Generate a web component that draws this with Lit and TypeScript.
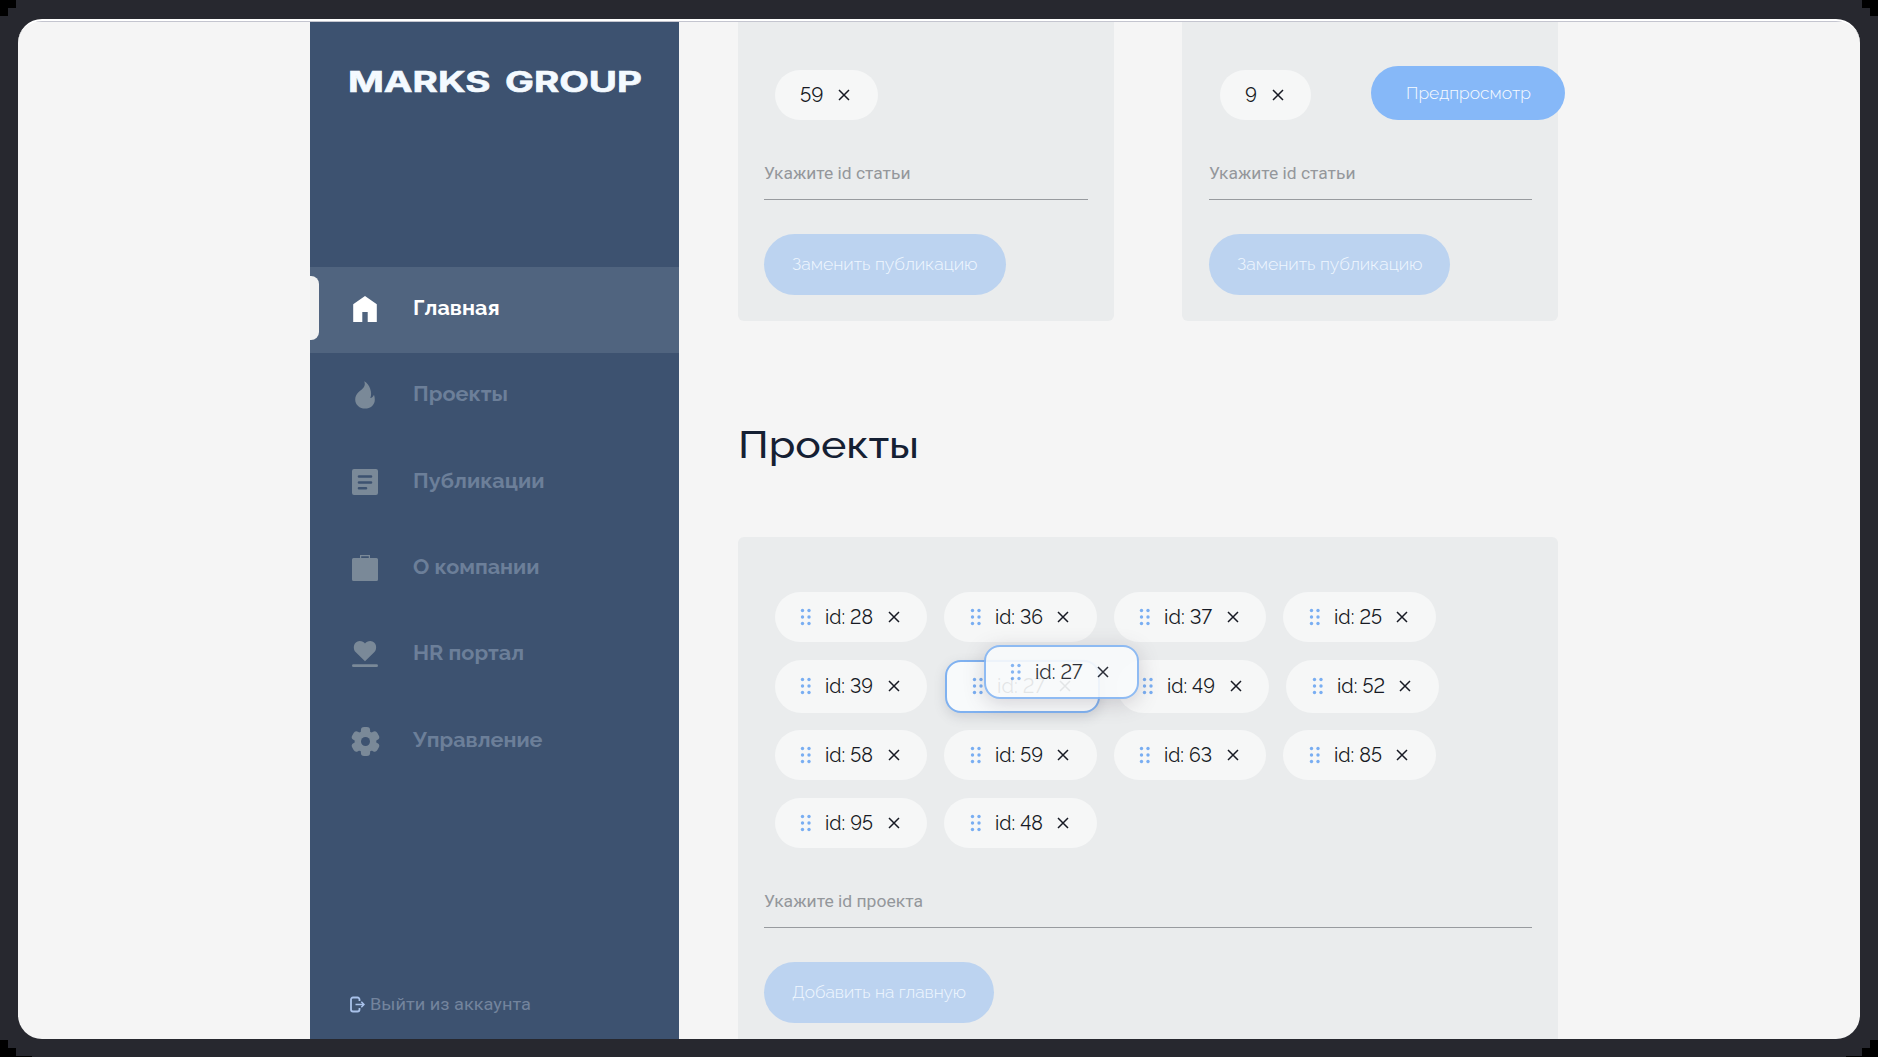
import { LitElement, html, css, svg } from "lit";
import { customElement, property } from "lit/decorators.js";
import { classMap } from "lit/directives/class-map.js";

/** A single line of text stretched horizontally to an exact width. */
@customElement("fit-text")
class FitText extends LitElement {
  @property({ type: Number }) width = 0;
  @property() text = "";
  static styles = css`
    :host { display: block; white-space: pre; flex: none; }
    .ink { display: inline-block; transform-origin: 0 50%; }
  `;
  render() {
    return html`<span class="ink">${this.text}</span>`;
  }
  updated() {
    const ink = this.renderRoot.querySelector(".ink") as HTMLElement;
    const exact = ink.getBoundingClientRect().width || 1;
    this.style.width = `${this.width}px`;
    ink.style.transform = `scaleX(${this.width / exact})`;
  }
}

const icons: Record<string, unknown> = {
  home: svg`<path d="M14 1 2.200 9.300V27h9.100V17h5.400v10h9.100V9.300z"/>`,
  fire: svg`<path d="M13.200 .2c1 2.500.8 4.300-.6 6.300C10.700 9.300 4.200 12 4.200 18.500 4.200 24 8.700 27.600 14 27.600c5.600 0 9.800-3.700 9.800-8.900 0-1.800-.2-3.300-.8-4.900-.8 2-2 3.100-3.700 3.300 1.100-2.700 1.100-6-.2-9.600C18 4.300 16 1.800 13.200.2z"/>`,
  article: svg`<path fill-rule="evenodd" d="M3 1h22a2 2 0 0 1 2 2v22a2 2 0 0 1-2 2H3a2 2 0 0 1-2-2V3a2 2 0 0 1 2-2zM8 7.200a1.200 1.200 0 0 0 0 2.600h12a1.200 1.200 0 0 0 0-2.600zM8 13.200a1.200 1.200 0 0 0 0 2.600h12a1.200 1.200 0 0 0 0-2.600zM8 18.900a1.200 1.200 0 0 0 0 2.600h7a1.200 1.200 0 0 0 0-2.600z"/>`,
  bag: svg`<path fill-rule="evenodd" d="M9 4V1h10v3h6.500A1.500 1.500 0 0 1 27 5.500v20a1.500 1.500 0 0 1-1.500 1.500h-23A1.500 1.500 0 0 1 1 25.500v-20A1.500 1.500 0 0 1 2.500 4zm1.200 0h7.600V2.200h-7.600z"/>`,
  heart: svg`<path d="M14 21.200 4.800 12.300C1.300 8.800 2.400 1.300 8.600.9c2.500 0 4.300 1 5.400 2.700C15.100 1.900 16.900.9 19.400.9c6.200.4 7.300 7.900 3.800 11.400z"/><rect x="1" y="24.200" width="26" height="2.900" rx="1.450"/>`,
  gear: svg`<circle cx="14.500" cy="14.500" r="10.800"/>${[0, 60, 120].map(a => svg`<rect x="9.900" y="0" width="9.200" height="29" rx="3.200" transform="rotate(${a} 14.500 14.500)"/>`)}<circle class="hole" cx="14.500" cy="14.500" r="4.500"/>`,
};

const menu = [
  { icon: "home", label: "Главная", width: 86.5 },
  { icon: "fire", label: "Проекты", width: 95 },
  { icon: "article", label: "Публикации", width: 131.5 },
  { icon: "bag", label: "О компании", width: 126.5 },
  { icon: "heart", label: "HR портал", width: 111 },
  { icon: "gear", label: "Управление", width: 129.5 },
];

@customElement("side-menu")
class SideMenu extends LitElement {
  static styles = css`
    :host { display: flex; flex-direction: column; width: 369px; flex: none; background: #3d5270; }
    .logo { padding: 44.500px 0 0 37.500px; height: 200.500px; font: 700 28px/30px Inter, "Liberation Sans", sans-serif; word-spacing: 4px; color: #f4faff; -webkit-text-stroke: 0.6px #f4faff; }
    .item { position: relative; display: flex; align-items: center; height: 86.300px; flex: none; color: #6c7f99; font: 700 21px/30px Raleway, "Open Sans", sans-serif; }
    .item.active { background: #50647f; color: #fff; }
    .item.active::before { content: ""; position: absolute; left: 0; top: 9px; width: 8.500px; height: 64px; border-radius: 0 8px 8px 0; background: #f1f2f2; }
    .icon { width: 28px; height: 30px; margin: 0 22px 0 41px; fill: #7a8998; overflow: visible; }
    .hole { fill: #3d5270; }
    .active .icon { fill: #fff; }
    .label { margin: -4px 0 0 12px; }
    .exit { display: flex; align-items: center; margin-top: auto; padding: 0 0 20px 40px; color: #73849d; font: 400 17px/30px Roboto, sans-serif; }
    .exit svg { width: 15px; height: 17px; margin-right: 4.500px; fill: none; stroke: #a9c2ea; stroke-width: 1.800; }
  `;
  render() {
    return html`
      <div class="logo"><fit-text text="MARKS GROUP" width="294"></fit-text></div>
      ${menu.map((m, i) => html`
        <div class=${classMap({ item: true, active: i === 0 })}>
          <svg class="icon" viewBox="0 0 28 30">${icons[m.icon]}</svg>
          <fit-text class="label" text=${m.label} width=${m.width}></fit-text>
        </div>`)}
      <div class="exit">
        <svg viewBox="0 0 15 17"><path d="M9.500 5V3.500A2 2 0 0 0 7.500 1.500H3a2 2 0 0 0-2 2v10a2 2 0 0 0 2 2h4.500a2 2 0 0 0 2-2V12"/><path d="M5.500 8.500H14M11.300 5.700l2.700 2.800-2.700 2.800" stroke-width="1.500"/></svg>
        <fit-text text="Выйти из аккаунта" width="161"></fit-text>
      </div>`;
  }
}

@customElement("id-chip")
class IdChip extends LitElement {
  @property() label = "";
  @property({ type: Number }) width = 48;
  @property({ type: Boolean }) handle = false;
  static styles = css`
    :host { display: flex; align-items: center; box-sizing: border-box; height: 50px; padding: 0 27.500px 0 25.500px; border-radius: 25px; background: #f6f7f7; color: #171a24; font: 400 20px/30px Raleway, "Open Sans", sans-serif; font-variant-numeric: lining-nums; }
    .dots { width: 12px; height: 18px; margin: 0 13px 0 0; fill: #79aef2; flex: none; }
    .close { width: 12px; height: 12px; margin-left: 14.500px; stroke: #171a24; stroke-width: 1.500; flex: none; }
  `;
  render() {
    return html`
      ${this.handle ? html`<svg class="dots" viewBox="0 0 12 18">${[2.5, 9].map(x => [2.5, 9, 15.5].map(y => svg`<circle cx=${x} cy=${y} r="1.700"/>`))}</svg>` : ""}
      <fit-text text=${this.label} width=${this.width}></fit-text>
      <svg class="close" viewBox="0 0 12 12"><path d="M1 1l10 10M11 1 1 11"/></svg>`;
  }
}

@customElement("id-form")
class IdForm extends LitElement {
  @property() hint = "";
  @property() action = "";
  @property({ type: Number }) hintWidth = 0;
  @property({ type: Number }) actionWidth = 0;
  static styles = css`
    :host { display: block; padding: 0 26px; }
    .field { height: 41px; margin-top: -1px; border-bottom: 1.500px solid #989b9f; color: #94979b; font: 400 17px/30px Roboto, sans-serif; }
    .button { display: inline-flex; align-items: center; height: 61px; margin-top: 34px; padding: 0 28px; border-radius: 31px; background: #bcd3f0; color: #f0f7ff; font: 300 17.500px/30px Raleway, "Open Sans", sans-serif; }
  `;
  render() {
    return html`
      <div class="field"><fit-text text=${this.hint} width=${this.hintWidth}></fit-text></div>
      <div class="button"><fit-text text=${this.action} width=${this.actionWidth}></fit-text></div>`;
  }
}

const rows = [[28, 36, 37, 25], [39, 27, 49, 52], [58, 59, 63, 85], [95, 48]];

@customElement("app-root")
class AppRoot extends LitElement {
  static styles = css`
    :host { display: block; width: 1878px; height: 1057px; }
    .stage { position: relative; box-sizing: border-box; width: 1878px; height: 1057px; padding: 19px 18px 18px; background: #27282f; overflow: hidden; }
    .notches { position: absolute; left: 0; top: 0; width: 1878px; height: 1057px; }
    .window { position: relative; box-sizing: border-box; height: 1020px; border-radius: 24px; overflow: hidden; background: #f5f5f5; border-top: 2px solid #fff; }
    .page { display: flex; height: 1018px; box-sizing: border-box; border-top: 1px solid #c4c5cf; padding-left: 292px; }
    .main { width: 820px; margin-left: 59px; flex: none; display: flex; flex-direction: column; }
    .pair { display: flex; gap: 68px; height: 298.500px; flex: none; }
    .card { background: #eaeced; border-radius: 6px; box-sizing: border-box; }
    .small { position: relative; width: 376px; border-radius: 0 0 6px 6px; padding-top: 47.500px; }
    .small + .small .line { margin-left: 37.500px; }
    .small + .small id-form { margin-left: 0.500px; }
    .line { display: flex; margin: 0 36px 39px 36.500px; }
    .preview { position: absolute; left: 189px; top: 43.500px; height: 54.500px; width: 194px; box-sizing: border-box; padding-left: 34.500px; display: flex; align-items: center; border-radius: 28px; background: #86b8f8; color: #f7fbff; font: 300 17.500px/30px Raleway, "Open Sans", sans-serif; }
    .title { margin: 98px 0 0 -0.500px; height: 118px; flex: none; font: 500 36.500px/54px Raleway, "Open Sans", sans-serif; color: #152033; }
    .big { flex: 1 0 520px; padding-top: 55px; }
    .row { display: flex; gap: 17px; margin: 0 36px 18px 36.500px; height: 50px; }
    .row.tall { height: 53px; margin-bottom: 17px; }
    .tall id-chip { height: 53px; border-radius: 27px; }
    .row.tall .origin { border: 2px solid #7fb1f0; border-radius: 16px; background: #f8fafb; box-shadow: 0 4px 12px #5a607030; width: 155px; padding-left: 25px; margin-left: 0.500px; }
    .drag { position: absolute; left: 966px; top: 624px; width: 155px; height: 53.500px; padding-left: 24px; border: 2px solid #84b5f3; border-radius: 16px; background: #f9fbfc; box-shadow: 0 4px 20px #5a506040; opacity: 0.9; }
    .last { margin-bottom: 39px; }
  `;
  render() {
    return html`
      <div class="stage">
        <svg class="notches" viewBox="0 0 1878 1057">
          <path d="M0 0h16v8H8v8H0zM1878 0h-16v8h8v8h8zM0 1040h8v8h8v8h16v1H0zM1878 1040h-8v8h-8v8h-16v1h32z"/>
        </svg>
        <div class="window">
          <div class="page">
            <side-menu></side-menu>
            <div class="main">
              <div class="pair">
                ${["59", "9"].map((n, i) => html`
                  <div class="card small">
                    <div class="line"><id-chip label=${n} width=${i ? 12 : 23.5}></id-chip></div>
                    <id-form hint="Укажите id статьи" .hintWidth=${146.5} action="Заменить публикацию" .actionWidth=${185.5}></id-form>
                    ${i ? html`<div class="preview"><fit-text text="Предпросмотр" width="125"></fit-text></div>` : ""}
                  </div>`)}
              </div>
              <div class="title"><fit-text text="Проекты" width="181"></fit-text></div>
              <div class="card big">
                ${rows.map((r, i) => html`
                  <div class=${classMap({ row: true, tall: i === 1, last: i === 3 })}>
                    ${r.map(n => html`<id-chip handle class=${classMap({ origin: n === 27 })} label="id: ${n}"></id-chip>`)}
                  </div>`)}
                <id-form hint="Укажите id проекта" .hintWidth=${159} action="Добавить на главную" .actionWidth=${174}></id-form>
              </div>
            </div>
          </div>
          <id-chip class="drag" handle label="id: 27" width="47.5"></id-chip>
        </div>
      </div>`;
  }
}
